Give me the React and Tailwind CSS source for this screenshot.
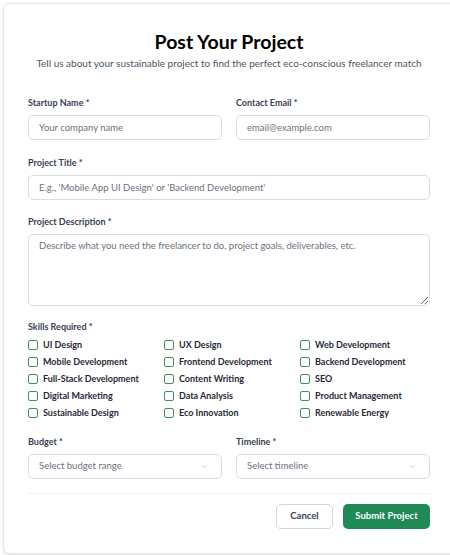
import React from "react";
import { ChevronDown } from "lucide-react";

const skills = [
  "UI Design",
  "UX Design",
  "Web Development",
  "Mobile Development",
  "Frontend Development",
  "Backend Development",
  "Full-Stack Development",
  "Content Writing",
  "SEO",
  "Digital Marketing",
  "Data Analysis",
  "Product Management",
  "Sustainable Design",
  "Eco Innovation",
  "Renewable Energy",
];

const Label = ({ children }) => (
  <label className="mb-[6px] block text-[9px] font-bold leading-[12px] text-[#374151]">{children}</label>
);

const inputCls =
  "block h-[25px] w-full rounded-[5px] border border-[#d9dce1] bg-white px-[10px] text-[9.5px] text-[#374151] placeholder:text-[#6b7280] outline-none";

const Select = ({ placeholder }) => (
  <div className="flex h-[25px] w-full items-center justify-between rounded-[5px] border border-[#d9dce1] bg-white pl-[10px] pr-[12px]">
    <span className="text-[9.5px] text-[#6b7280]">{placeholder}</span>
    <ChevronDown className="h-[9px] w-[9px] text-[#9ca3af]" strokeWidth={1.5} />
  </div>
);

export default function App() {
  return (
    <div className="h-[555px] w-[450px] overflow-hidden bg-white" style={{ fontFamily: 'Lato, "Open Sans", sans-serif' }}>
      <div className="ml-[3px] mt-[3px] w-[452px] rounded-[6px] border border-[#e5e7eb] bg-white px-[24px] pb-[24px] pt-[25px] shadow-sm">
        {/* Header */}
        <div className="text-center">
          <h1 className="text-[19.5px] font-bold leading-[26px] text-black">Post Your Project</h1>
          <p className="mt-[2px] whitespace-nowrap text-[10px] leading-[12px] text-[#4b5563]">
            Tell us about your sustainable project to find the perfect eco-conscious freelancer match
          </p>
        </div>

        <div className="mt-[28px] grid grid-cols-2 gap-x-[14px]">
          <div>
            <Label>Startup Name *</Label>
            <input className={inputCls} placeholder="Your company name" />
          </div>
          <div>
            <Label>Contact Email *</Label>
            <input className={inputCls} placeholder="email@example.com" />
          </div>
        </div>

        <div className="mt-[17px]">
          <Label>Project Title *</Label>
          <input className={inputCls} placeholder="E.g., 'Mobile App UI Design' or 'Backend Development'" />
        </div>

        <div className="mt-[16px]">
          <Label>Project Description *</Label>
          <textarea
            className="block h-[72px] w-full resize-y rounded-[5px] border border-[#d9dce1] bg-white px-[10px] py-[5px] text-[9.5px] leading-[12px] text-[#374151] outline-none placeholder:text-[#6b7280]"
            placeholder="Describe what you need the freelancer to do, project goals, deliverables, etc."
          />
        </div>

        <div className="mt-[15px]">
          <Label>Skills Required *</Label>
          <div className="grid grid-cols-3 gap-x-[6px] gap-y-[5px]">
            {skills.map((s) => (
              <label key={s} className="flex h-[12px] items-center gap-[5px]">
                <span className="h-[10px] w-[10px] shrink-0 rounded-[2px] border border-[#3f8f62] bg-white" />
                <span className="text-[9px] font-bold leading-[12px] text-[#1f2937]">{s}</span>
              </label>
            ))}
          </div>
        </div>

        <div className="mt-[17px] grid grid-cols-2 gap-x-[14px]">
          <div>
            <Label>Budget *</Label>
            <Select placeholder="Select budget range" />
          </div>
          <div>
            <Label>Timeline *</Label>
            <Select placeholder="Select timeline" />
          </div>
        </div>

        <div className="mt-[14px] flex justify-end gap-[10px] border-t border-[#f0f1f3] pt-[10px]">
          <button className="h-[25px] w-[57px] rounded-[5px] border border-[#d1d5db] bg-white text-[9.5px] font-bold text-[#374151]">
            Cancel
          </button>
          <button className="h-[25px] w-[87px] rounded-[5px] bg-[#1f8a55] text-[9.5px] font-bold text-white">
            Submit Project
          </button>
        </div>
      </div>
    </div>
  );
}
